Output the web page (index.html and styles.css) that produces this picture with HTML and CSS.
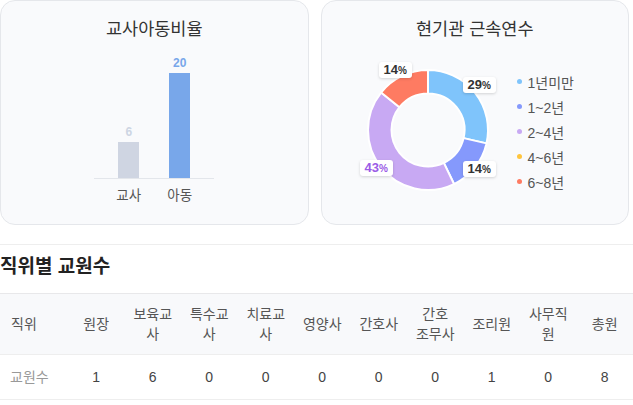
FILE: index.html
```html
<!DOCTYPE html>
<html lang="ko">
<head>
<meta charset="utf-8">
<link rel="stylesheet" href="styles.css">
</head>
<body>
<div class="cards">
  <section class="card">
    <h2 class="card-title">교사아동비율</h2>
    <div class="bar-chart">
      <div class="bar-col">
        <span class="bar-value teacher-text">6</span>
        <div class="bar teacher" style="height:36px"></div>
      </div>
      <div class="bar-col">
        <span class="bar-value child-text">20</span>
        <div class="bar child" style="height:105px"></div>
      </div>
    </div>
    <div class="bar-labels">
      <span>교사</span>
      <span>아동</span>
    </div>
  </section>
  <section class="card">
    <h2 class="card-title">현기관 근속연수</h2>
    <div class="donut-row">
      <div class="donut">
        <svg width="150" height="140" viewBox="0 0 150 140">
          <path class="seg" fill="#7fc4fb" d="M75,10 A60,60 0 0 1 133.496,83.351 L110.585,78.122 A36.5,36.5 0 0 0 75,33.5 Z"/>
          <path class="seg" fill="#8599fc" d="M133.496,83.351 A60,60 0 0 1 101.033,124.058 L90.837,102.885 A36.5,36.5 0 0 0 110.585,78.122 Z"/>
          <path class="seg" fill="#c8a9f3" d="M101.033,124.058 A60,60 0 0 1 28.090,32.591 L46.463,47.243 A36.5,36.5 0 0 0 90.837,102.885 Z"/>
          <path class="seg" fill="#fe7b62" d="M28.090,32.591 A60,60 0 0 1 75,10 L75,33.5 A36.5,36.5 0 0 0 46.463,47.243 Z"/>
        </svg>
        <span class="pct pct-a">29<small>%</small></span>
        <span class="pct pct-b">14<small>%</small></span>
        <span class="pct pct-c">43<small>%</small></span>
        <span class="pct pct-d">14<small>%</small></span>
      </div>
      <ul class="legend">
        <li><i class="dot d1"></i>1년미만</li>
        <li><i class="dot d2"></i>1~2년</li>
        <li><i class="dot d3"></i>2~4년</li>
        <li><i class="dot d4"></i>4~6년</li>
        <li><i class="dot d5"></i>6~8년</li>
      </ul>
    </div>
  </section>
</div>

<section class="staff">
  <h3 class="staff-title">직위별 교원수</h3>
  <table class="staff-table">
    <colgroup>
      <col class="c-first">
      <col class="c"><col class="c"><col class="c"><col class="c"><col class="c">
      <col class="c"><col class="c"><col class="c"><col class="c"><col class="c">
    </colgroup>
    <thead>
      <tr>
        <th class="first">직위</th>
        <th>원장</th>
        <th>보육교사</th>
        <th>특수교사</th>
        <th>치료교사</th>
        <th>영양사</th>
        <th>간호사</th>
        <th>간호 조무사</th>
        <th>조리원</th>
        <th>사무직원</th>
        <th>총원</th>
      </tr>
    </thead>
    <tbody>
      <tr>
        <td class="first">교원수</td>
        <td>1</td>
        <td>6</td>
        <td>0</td>
        <td>0</td>
        <td>0</td>
        <td>0</td>
        <td>0</td>
        <td>1</td>
        <td>0</td>
        <td>8</td>
      </tr>
    </tbody>
  </table>
</section>
</body>
</html>
```

FILE: styles.css
```css
body {
  margin: 0;
  width: 633px;
  background: #ffffff;
  font-family: "Liberation Sans", "Noto Sans CJK KR", sans-serif;
  color: #333;
}

.cards {
  display: grid;
  grid-template-columns: 1fr 1fr;
  gap: 12px;
  width: 629px;
}

.card {
  box-sizing: border-box;
  height: 225px;
  border: 1px solid #e5e7eb;
  border-radius: 15px;
  background: #f9fafc;
  padding-top: 16px;
}

.card-title {
  margin: 0;
  text-align: center;
  font-size: 17.5px;
  line-height: 24px;
  font-weight: normal;
  color: #333;
}

/* bar chart */
.bar-chart {
  width: 120px;
  height: 122px;
  margin: 15px auto 0;
  display: flex;
  justify-content: center;
  align-items: flex-end;
  gap: 30px;
  border-bottom: 1px solid #e3e6eb;
}

.bar-col {
  width: 21px;
  display: flex;
  flex-direction: column;
  align-items: center;
}

.bar-value {
  font-size: 12px;
  line-height: 14px;
  font-weight: bold;
  margin-bottom: 3px;
}

.teacher-text { color: #cdd5e3; }
.child-text { color: #78a7ea; }

.bar { width: 21px; }
.teacher { background: #cfd5e2; }
.child { background: #78a7ea; }

.bar-labels {
  width: 102px;
  margin: 8px auto 0;
  display: flex;
  font-size: 13.5px;
  line-height: 18px;
  color: #555;
}

.bar-labels span {
  flex: 1;
  text-align: center;
}

/* donut */
.donut-row {
  display: flex;
  align-items: flex-start;
  margin-top: 19px;
  padding-left: 31px;
}

.donut {
  position: relative;
  width: 150px;
  height: 140px;
}

.donut svg { display: block; }

.seg {
  stroke: #ffffff;
  stroke-width: 2;
  stroke-linejoin: round;
}

.pct {
  position: absolute;
  height: 16px;
  line-height: 16px;
  padding: 0 5px;
  background: #ffffff;
  border-radius: 3px;
  box-shadow: 0 1px 3px rgba(0, 0, 0, 0.16);
  font-size: 13px;
  font-weight: bold;
  color: #333;
  white-space: nowrap;
}

.pct small {
  font-size: 10px;
  font-weight: bold;
}

.pct-a { left: 110px; top: 17px; }
.pct-b { left: 110px; top: 101px; }
.pct-c { left: 7px; top: 100px; color: #9b5ce6; }
.pct-d { left: 26px; top: 2px; }

.legend {
  list-style: none;
  margin: 9px 0 0 14px;
  padding: 0;
}

.legend li {
  display: flex;
  align-items: center;
  height: 25px;
  font-size: 14px;
  color: #555;
  white-space: nowrap;
}

.dot {
  width: 5px;
  height: 5px;
  border-radius: 50%;
  margin-right: 6px;
}

.d1 { background: #7fc4fb; }
.d2 { background: #8599fc; }
.d3 { background: #c8a9f3; }
.d4 { background: #ffc53d; }
.d5 { background: #fe7b62; }

/* staff table */
.staff {
  margin-top: 19px;
  border-top: 1px solid #eeeeee;
  padding-top: 10px;
}

.staff-title {
  margin: 0;
  font-size: 19px;
  line-height: 24px;
  font-weight: bold;
  color: #222;
}

.staff-table {
  margin-top: 14px;
  width: 633px;
  table-layout: fixed;
  border-collapse: collapse;
  font-size: 14px;
}

.c-first { width: 68px; }
.c { width: 56.5px; }

.staff-table thead tr {
  background: #f8f9fb;
  border-top: 1px solid #e8e8ea;
  border-bottom: 1px solid #eeeeee;
}

.staff-table th {
  font-weight: normal;
  color: #555;
  line-height: 20px;
  padding: 10px 8px;
  text-align: center;
}

.staff-table td {
  color: #444;
  line-height: 20px;
  padding: 12px 8px;
  text-align: center;
}

.staff-table tbody tr {
  border-bottom: 1px solid #eeeeee;
}

.staff-table th.first,
.staff-table td.first {
  text-align: left;
  padding-left: 11px;
}

.staff-table td.first {
  color: #999;
  padding-left: 10px;
}
```
